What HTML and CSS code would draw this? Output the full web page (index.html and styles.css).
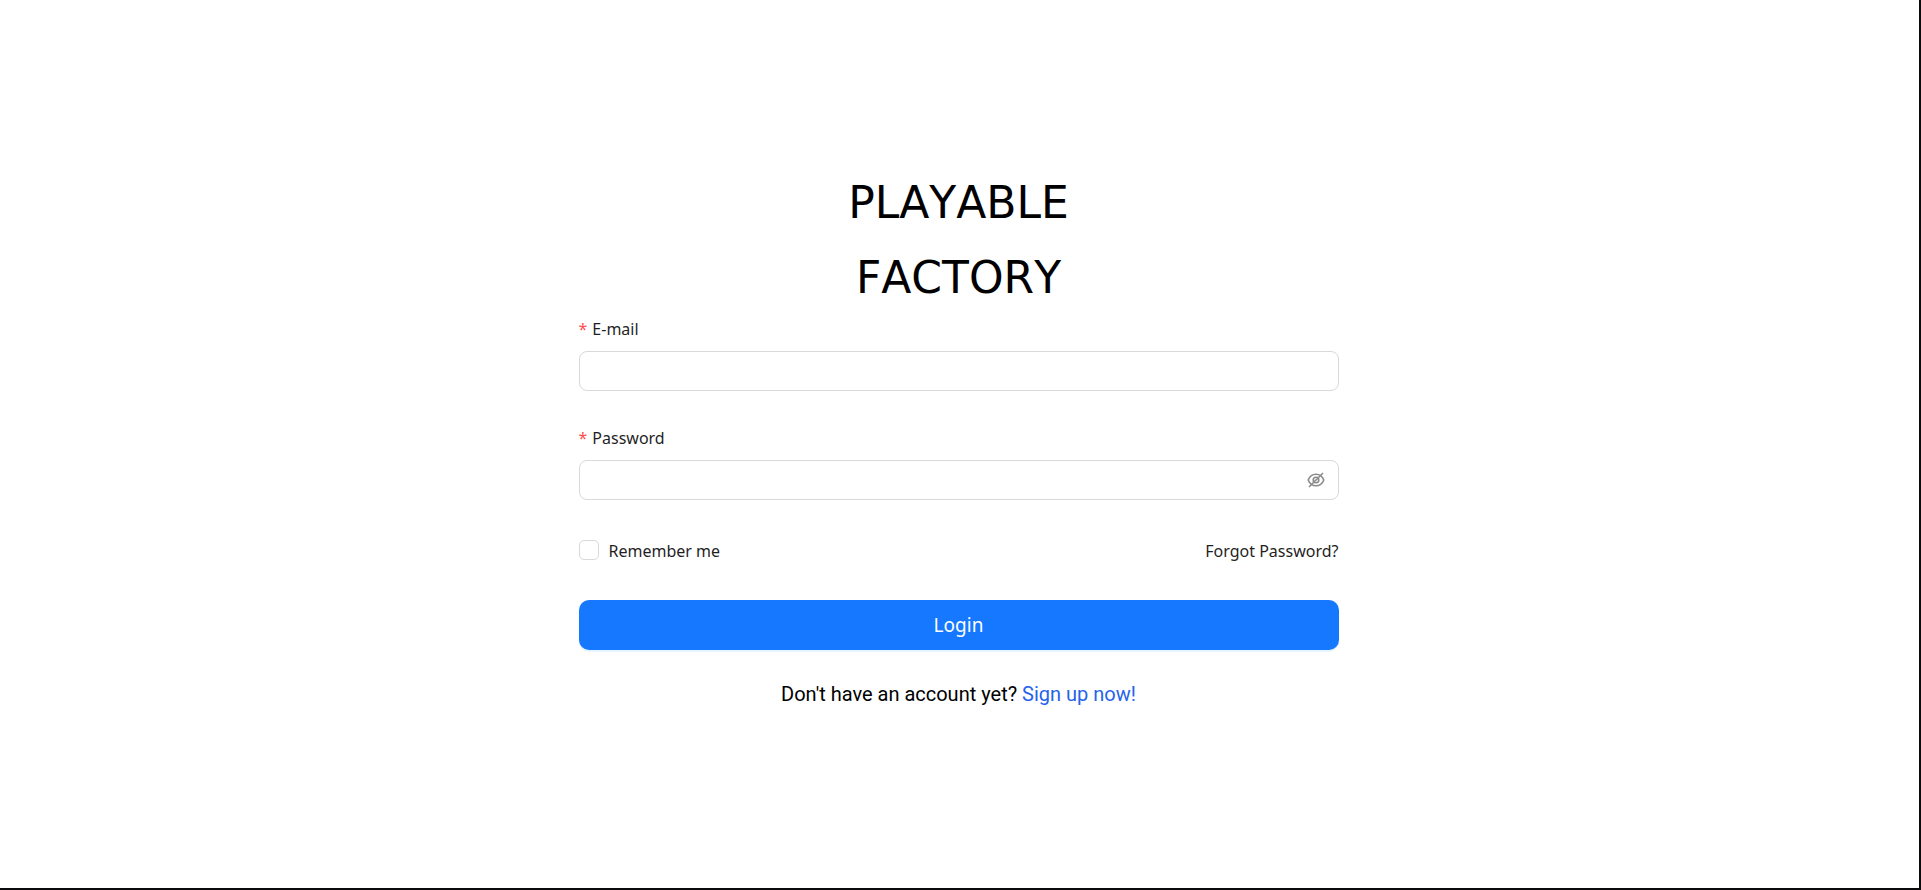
FILE: index.html
```html
<!DOCTYPE html>
<html lang="en">
<head>
<meta charset="utf-8">
<meta name="viewport" content="width=device-width, initial-scale=1">
<title>Playable Factory - Login</title>
<link rel="stylesheet" href="styles.css">
</head>
<body>
<main class="page">
  <div class="login">
    <h1 class="brand"><span>PLAYABLE</span><span>FACTORY</span></h1>
    <form class="form">
      <div class="field">
        <label class="field-label" for="email"><span class="required" aria-hidden="true">*</span>E-mail</label>
        <input class="field-input" id="email" type="email" required>
      </div>
      <div class="field">
        <label class="field-label" for="password"><span class="required" aria-hidden="true">*</span>Password</label>
        <div class="password-box">
          <input class="password-input" id="password" type="password" required>
          <button class="reveal" type="button" aria-label="Show password">
            <svg class="reveal-icon" viewBox="0 0 18 18" fill="none" stroke="currentColor" stroke-width="1.6" aria-hidden="true">
              <path d="M1.200 9C2.800 5 5.400 3.200 9 3.200S15.200 5 16.800 9C15.200 13 12.600 14.800 9 14.800S2.800 13 1.200 9Z"/>
              <circle cx="9" cy="9" r="2.800"/>
              <path d="M2 16 16 2"/>
            </svg>
          </button>
        </div>
      </div>
      <div class="options">
        <label class="remember" for="remember"><input class="checkbox" id="remember" type="checkbox">Remember me</label>
        <a class="forgot" href="#forgot">Forgot Password?</a>
      </div>
      <button class="submit" type="submit">Login</button>
    </form>
    <p class="signup">Don't have an account yet? <a class="signup-link" href="#signup">Sign up now!</a></p>
  </div>
</main>
</body>
</html>
```
FILE: styles.css
```css
* {
  box-sizing: border-box;
}

body {
  margin: 0;
  background: #fff;
  color: #000;
  font-family: "Noto Sans", "Open Sans", sans-serif;
}

.page {
  display: flex;
  align-items: center;
  justify-content: center;
  min-height: 100vh;
  padding: 0 18px 14px 16px;
  border-right: 2px solid #0b0a0c;
  border-bottom: 2px solid #0b0a0c;
}

.login {
  width: 100%;
  max-width: 760px;
}

.brand {
  display: flex;
  flex-direction: column;
  align-items: center;
  margin: 0;
  font-family: "DejaVu Sans", sans-serif;
  font-size: 44px;
  font-weight: 400;
  font-kerning: none;
  line-height: 75px;
}

.form {
  display: flex;
  flex-direction: column;
}

.field {
  display: flex;
  flex-direction: column;
  gap: 8px;
  margin-bottom: 33px;
}

.field-label {
  display: flex;
  gap: 5px;
  color: #1f1f1f;
  font-size: 16px;
  line-height: 28px;
}

.required {
  color: #ff4d4f;
}

.field-input,
.password-box {
  width: 100%;
  height: 40px;
  border: 1px solid #d9d9d9;
  border-radius: 8px;
  background: #fff;
}

.field-input {
  padding: 0 14px;
  font: inherit;
}

.password-box {
  display: flex;
  align-items: center;
  padding: 0 13px;
}

.password-input {
  flex: 1;
  min-width: 0;
  border: 0;
  padding: 0;
  background: none;
  font: inherit;
}

.reveal {
  display: flex;
  border: 0;
  padding: 0;
  background: none;
  color: #8c8c8c;
  cursor: pointer;
}

.reveal-icon {
  width: 18px;
  height: 18px;
}

.options {
  display: flex;
  justify-content: space-between;
  margin: 2px 0 33px;
  color: #1f1f1f;
  font-size: 16px;
  line-height: 32px;
}

.remember {
  display: flex;
  align-items: flex-start;
  gap: 10px;
}

.checkbox {
  appearance: none;
  width: 20px;
  height: 20px;
  margin: 5px 0;
  border: 1px solid #d9d9d9;
  border-radius: 5px;
  background: #fff;
}

.checkbox:checked {
  border-color: #1677ff;
  background: #1677ff;
}

.forgot {
  color: inherit;
  text-decoration: none;
}

.submit {
  height: 50px;
  border: 0;
  border-radius: 10px;
  background: #1677ff;
  box-shadow: 0 2px 0 #e6f4ff;
  color: #fff;
  font-family: inherit;
  font-size: 19px;
  cursor: pointer;
}

.signup {
  margin: 29px 0 0;
  font-family: Roboto, sans-serif;
  font-size: 20px;
  line-height: 30px;
  text-align: center;
}

.signup-link {
  color: #2563eb;
  text-decoration: none;
}
```
